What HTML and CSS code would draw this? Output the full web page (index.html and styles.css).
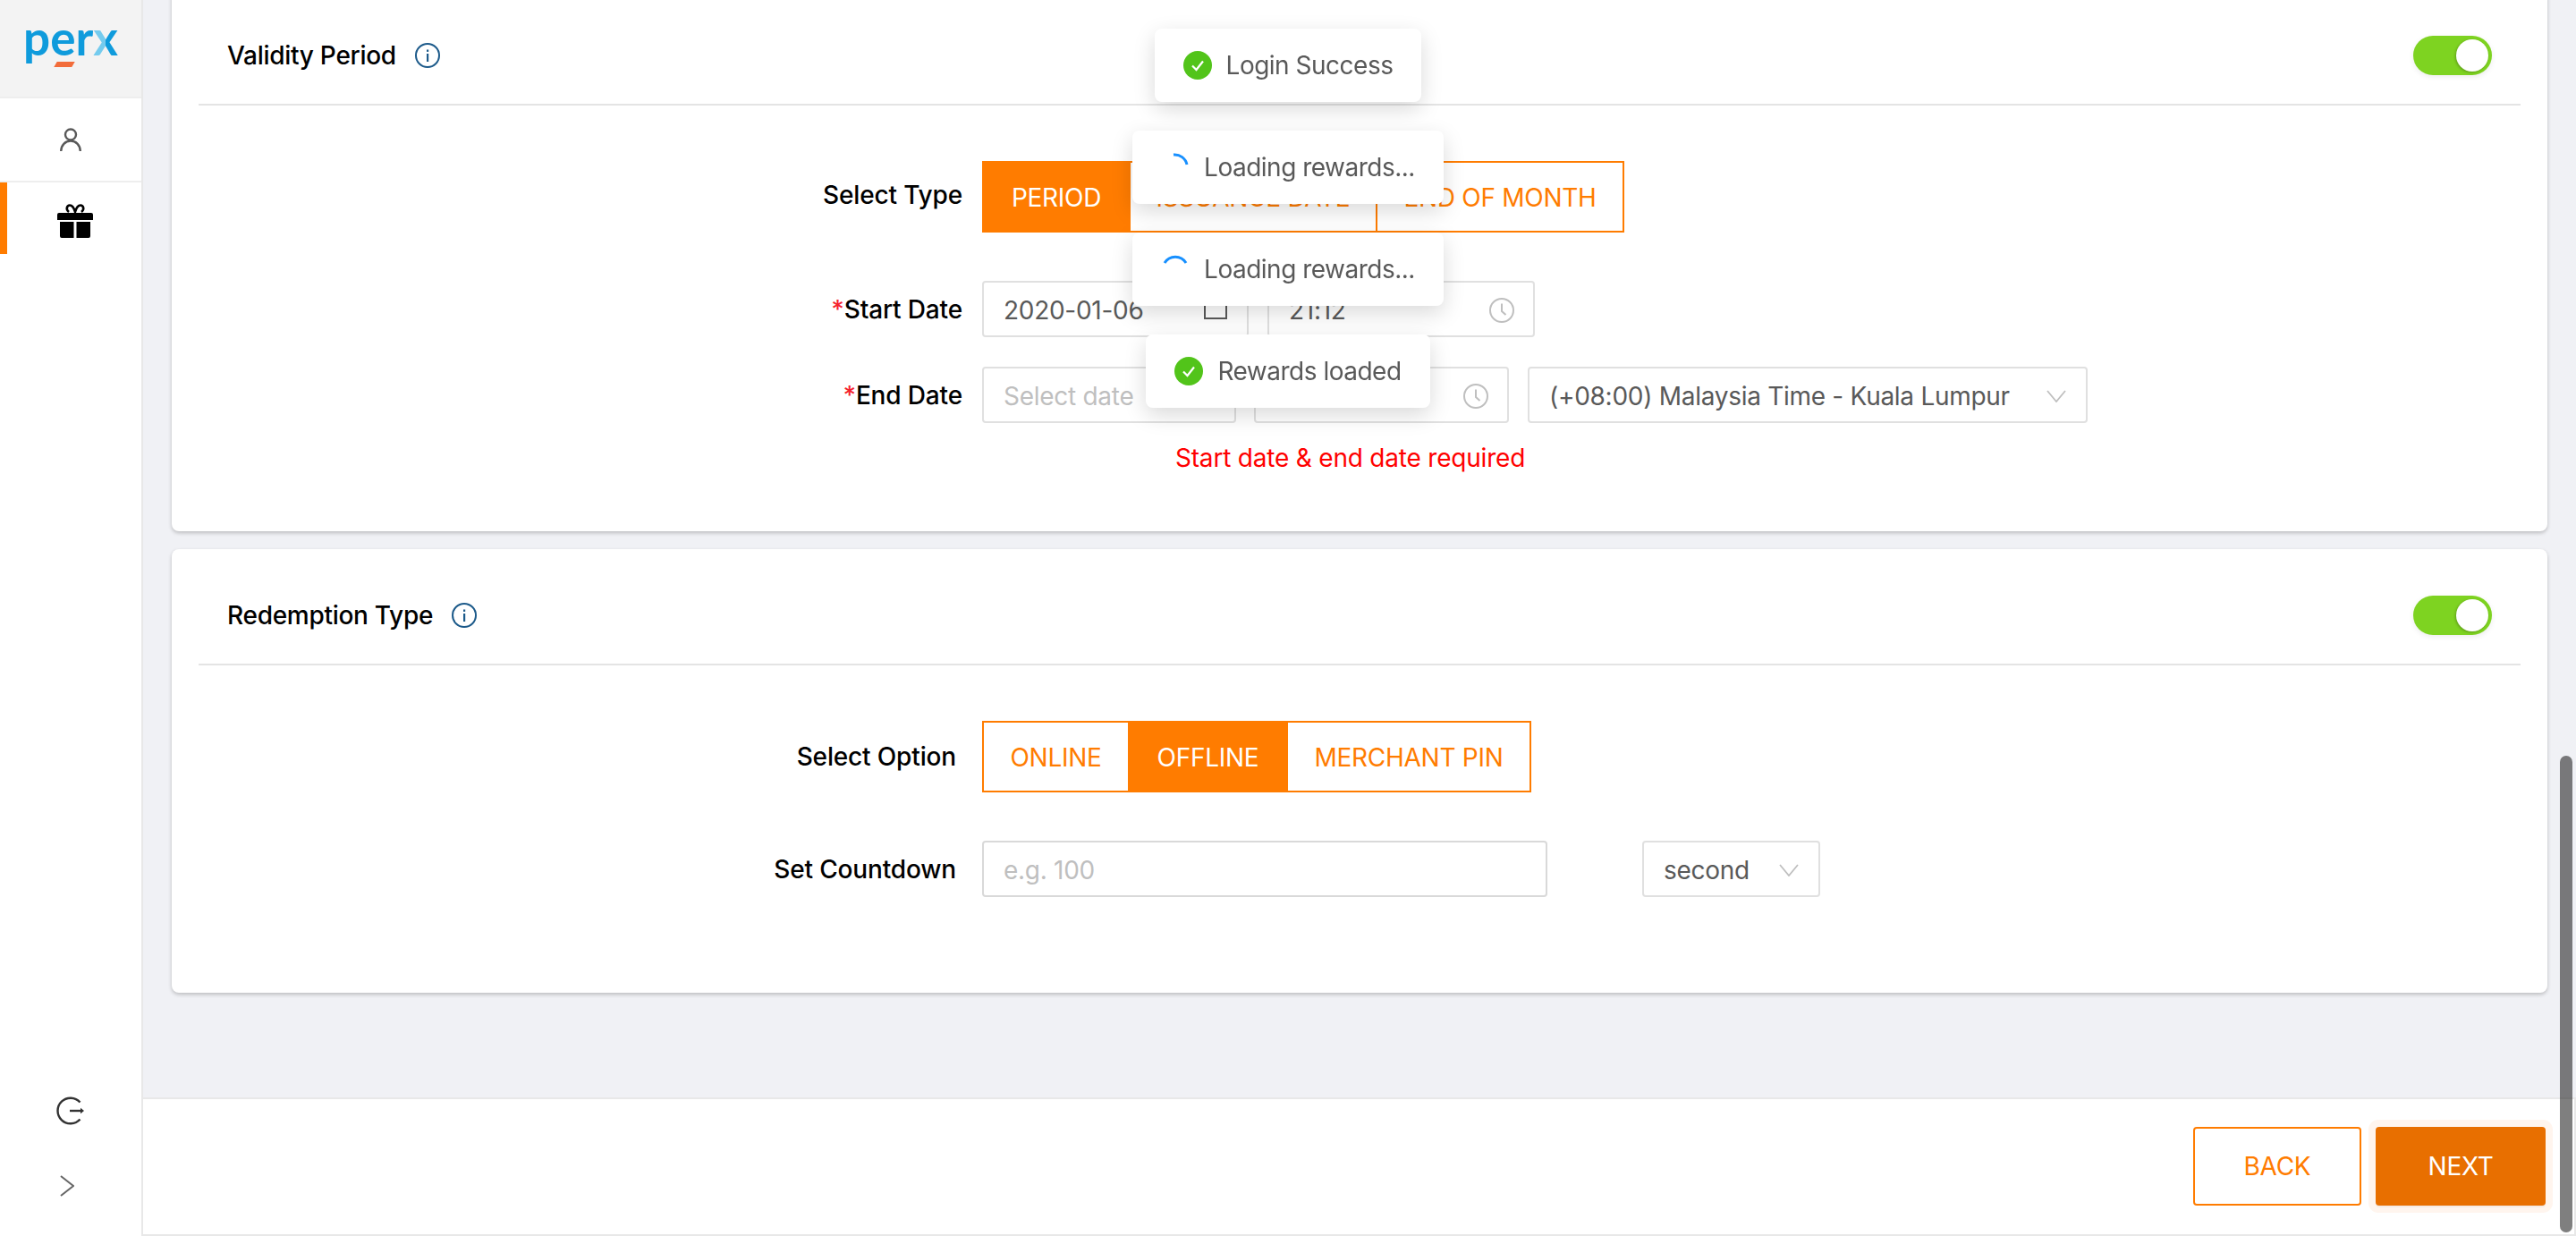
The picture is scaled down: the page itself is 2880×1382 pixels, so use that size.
FILE: index.html
```html
<!DOCTYPE html>
<html lang="en">
<head>
  <meta charset="UTF-8">
  <meta name="viewport" content="width=device-width, initial-scale=1.0">
  <title>Rewards</title>
  <link rel="stylesheet" href="styles.css">
</head>
<body>

  <aside class="sidebar">
    <div class="logo"><span class="logo-text">per<span class="logo-x">x</span></span><i class="logo-bar"></i></div>
    <a class="nav-item">
      <svg width="24" height="26" viewBox="0 0 24 26" fill="none" stroke="#595959" stroke-width="2.4"><circle cx="12" cy="7.5" r="6"/><path d="M1.2 26c0-6.500 4.800-11.500 10.800-11.500S22.800 19.500 22.800 26"/></svg>
    </a>
    <a class="nav-item nav-item-active">
      <svg width="40" height="38" viewBox="0 0 40 38"><path d="M13 9C9 6 11 1.500 14 1.500c3 0 5 4 6 7.500 1-3.500 3-7.500 6-7.500 3 0 5 4.500 1 7.500" fill="none" stroke="#000" stroke-width="2.600"/><path d="M2 10h36a2 2 0 0 1 2 2v6H0v-6a2 2 0 0 1 2-2zM3 20h15.500v18H5a2 2 0 0 1-2-2zM21.500 20H37v16a2 2 0 0 1-2 2H21.500z" fill="#000"/></svg>
    </a>
    <div class="sidebar-bottom">
      <svg class="logout-icon" width="32" height="32" viewBox="0 0 32 32" fill="none" stroke="#333" stroke-width="2.400"><path d="M26.500 6.500A14.300 14.300 0 1 0 26.500 25.500"/><path d="M15 16h14"/><path d="M27 12.800l4 3.200-4 3.200z" fill="#333" stroke="none"/></svg>
      <svg class="collapse-icon" width="16" height="24" viewBox="0 0 16 24" fill="none" stroke="#666" stroke-width="2"><path d="M1 1l14 11L1 23"/></svg>
    </div>
  </aside>

  <main class="main">
    <div class="content">

      <section class="card card-validity">
        <div class="card-header">
          <span class="card-title">Validity Period</span>
          <svg class="info-icon" width="28" height="28" viewBox="0 0 28 28"><circle cx="14" cy="14" r="13" fill="none" stroke="#1c5a8a" stroke-width="2"/><rect x="13" y="12" width="2.200" height="9" fill="#1c5a8a"/><rect x="13" y="7.500" width="2.200" height="2.400" fill="#1c5a8a"/></svg>
          <span class="toggle"><i class="toggle-knob"></i></span>
        </div>

        <div class="form-row row-type">
          <label class="form-label">Select Type</label>
          <div class="btn-group">
            <a class="btn-option btn-option-active opt-period">PERIOD</a>
            <a class="btn-option opt-issuance">ISSUANCE DATE</a>
            <a class="btn-option opt-month">END OF MONTH</a>
          </div>
        </div>

        <div class="form-row row-start">
          <label class="form-label"><span class="required">*</span>Start Date</label>
          <div class="field field-date-start">
            <span class="field-value">2020-01-06</span>
            <svg class="field-icon" width="26" height="24" viewBox="0 0 26 24" fill="none" stroke="#595959" stroke-width="2"><rect x="1" y="3" width="24" height="18"/></svg>
          </div>
          <div class="field field-time-start">
            <span class="field-value">21:12</span>
            <svg class="field-icon" width="28" height="28" viewBox="0 0 28 28" fill="none" stroke="#bfbfbf" stroke-width="2"><circle cx="14" cy="14" r="13"/><path d="M14 6.500V15l4.500 4"/></svg>
          </div>
        </div>

        <div class="form-row row-end">
          <label class="form-label"><span class="required">*</span>End Date</label>
          <div class="field field-date-end">
            <span class="field-placeholder">Select date</span>
          </div>
          <div class="field field-time-end">
            <svg class="field-icon" width="28" height="28" viewBox="0 0 28 28" fill="none" stroke="#bfbfbf" stroke-width="2"><circle cx="14" cy="14" r="13"/><path d="M14 6.500V15l4.500 4"/></svg>
          </div>
          <div class="field field-timezone">
            <span class="field-value">(+08:00) Malaysia Time - Kuala Lumpur</span>
            <svg class="field-icon" width="22" height="14" viewBox="0 0 22 14" fill="none" stroke="#bfbfbf" stroke-width="1.800"><path d="M1 1l10 12L21 1"/></svg>
          </div>
        </div>

        <p class="form-error">Start date &amp; end date required</p>
      </section>

      <section class="card card-redemption">
        <div class="card-header">
          <span class="card-title">Redemption Type</span>
          <svg class="info-icon" width="28" height="28" viewBox="0 0 28 28"><circle cx="14" cy="14" r="13" fill="none" stroke="#1c5a8a" stroke-width="2"/><rect x="13" y="12" width="2.200" height="9" fill="#1c5a8a"/><rect x="13" y="7.500" width="2.200" height="2.400" fill="#1c5a8a"/></svg>
          <span class="toggle"><i class="toggle-knob"></i></span>
        </div>

        <div class="form-row row-option">
          <label class="form-label">Select Option</label>
          <div class="btn-group">
            <a class="btn-option opt-online">ONLINE</a>
            <a class="btn-option btn-option-active opt-offline">OFFLINE</a>
            <a class="btn-option opt-pin">MERCHANT PIN</a>
          </div>
        </div>

        <div class="form-row row-countdown">
          <label class="form-label">Set Countdown</label>
          <div class="field field-countdown">
            <span class="field-placeholder">e.g. 100</span>
          </div>
          <div class="field field-unit">
            <span class="field-value">second</span>
            <svg class="field-icon" width="22" height="14" viewBox="0 0 22 14" fill="none" stroke="#bfbfbf" stroke-width="1.800"><path d="M1 1l10 12L21 1"/></svg>
          </div>
        </div>
      </section>

    </div>

    <footer class="footer">
      <a class="btn btn-back">BACK</a>
      <a class="btn btn-next">NEXT</a>
    </footer>
  </main>

  <!-- messages flottants -->
  <div class="toasts">
    <div class="toast">
      <svg class="toast-icon" width="32" height="32" viewBox="0 0 32 32"><circle cx="16" cy="16" r="16" fill="#52c41a"/><path d="M10 16.500l4.500 4.500L22 11.500" fill="none" stroke="#fff" stroke-width="2.200"/></svg>
      Login Success
    </div>
    <div class="toast">
      <svg class="toast-icon" width="32" height="32" viewBox="0 0 32 32" fill="none" stroke="#1890ff" stroke-width="3"><path d="M14 2a14 14 0 0 1 15 11"/></svg>
      Loading rewards...
    </div>
    <div class="toast">
      <svg class="toast-icon" width="32" height="32" viewBox="0 0 32 32" fill="none" stroke="#1890ff" stroke-width="3"><path d="M4 9a14 14 0 0 1 24 0"/></svg>
      Loading rewards...
    </div>
    <div class="toast">
      <svg class="toast-icon" width="32" height="32" viewBox="0 0 32 32"><circle cx="16" cy="16" r="16" fill="#52c41a"/><path d="M10 16.500l4.500 4.500L22 11.500" fill="none" stroke="#fff" stroke-width="2.200"/></svg>
      Rewards loaded
    </div>
  </div>

  <div class="scrollbar-thumb"></div>

</body>
</html>
```

FILE: styles.css
```css
html, body {
  height: 100%;
}

body {
  font-family: 'Inter', 'Liberation Sans', sans-serif;
  font-size: 28px;
  letter-spacing: -0.28px;
  background-color: #f0f1f5;
  margin: 0;
  padding: 0;
  color: #595959;
  display: flex;
  overflow: hidden;
}

/* Sidebar */

.sidebar {
  width: 158px;
  flex-shrink: 0;
  background-color: #fff;
  border-right: 2px solid #e8e8e8;
  display: flex;
  flex-direction: column;
}

.logo {
  height: 108px;
  background-color: #f3f3f3;
  border-bottom: 2px solid #eee;
  position: relative;
  display: flex;
  justify-content: center;
}

.logo-text {
  font-family: 'Lato', sans-serif;
  font-size: 53px;
  font-weight: 700;
  line-height: 84px;
  letter-spacing: 0;
  color: #0f9bdc;
}

.logo-x {
  background: linear-gradient(to right, #74cbee 50%, #0f9bdc 50%);
  -webkit-background-clip: text;
  background-clip: text;
  color: transparent;
}

.logo-bar {
  position: absolute;
  left: 62px;
  top: 69px;
  width: 20px;
  height: 6px;
  background-color: #f26c3a;
  transform: skewX(-30deg);
}

.nav-item {
  display: flex;
  align-items: center;
  justify-content: center;
  height: 92px;
  border-bottom: 2px solid #eee;
}

.nav-item-active {
  height: 80px;
  border-bottom: none;
  border-left: 8px solid #ff7c00;
  padding-left: 2px;
  align-items: flex-start;
}

.nav-item-active svg {
  margin-top: 24px;
}

.sidebar-bottom {
  margin-top: auto;
  display: flex;
  flex-direction: column;
  align-items: center;
  padding-bottom: 44px;
}

.logout-icon {
  margin-bottom: 56px;
}

.collapse-icon {
  margin-left: -8px;
}

/* Main */

.main {
  flex: 1;
  min-width: 0;
  display: flex;
  flex-direction: column;
  height: 100%;
}

.content {
  flex: 1;
  min-height: 0;
  overflow: hidden;
  padding: 0 32px;
}

.card {
  background-color: #fff;
  border-radius: 8px;
  box-shadow: 0 2px 4px rgba(0, 0, 0, 0.22);
  padding: 0 30px;
  box-sizing: border-box;
}

.card-validity {
  margin-top: -12px;
  height: 606px;
  margin-bottom: 20px;
}

.card-redemption {
  height: 496px;
}

.card-header {
  height: 130px;
  box-sizing: border-box;
  border-bottom: 2px solid #e4e4e4;
  display: flex;
  align-items: center;
  padding: 20px 2px 0 32px;
}

.card-title {
  color: #000;
  font-weight: 500;
  margin-right: 21px;
}

.info-icon {
  flex-shrink: 0;
}

.toggle {
  margin-left: auto;
  margin-right: 30px;
  width: 88px;
  height: 44px;
  border-radius: 22px;
  background-color: #7ed321;
  display: flex;
  align-items: center;
  justify-content: flex-end;
  padding-right: 4px;
  box-sizing: border-box;
  box-shadow: 0 2px 6px rgba(0, 0, 0, 0.08);
}

.toggle-knob {
  width: 36px;
  height: 36px;
  border-radius: 50%;
  background-color: #fff;
  box-shadow: -1px 1px 3px rgba(0, 0, 0, 0.25);
}

/* Form */

.form-row {
  display: flex;
  align-items: center;
  margin-left: -30px;
}

.form-label {
  width: 884px;
  margin-right: 22px;
  text-align: right;
  color: #000;
  font-weight: 500;
  letter-spacing: -0.15px;
  flex-shrink: 0;
}

.card-redemption .form-label {
  width: 877px;
  margin-right: 29px;
}

.required {
  color: #f5222d;
}

.row-type {
  margin-top: 62px;
}

.row-type .form-label {
  margin-bottom: 4px;
}

.row-start {
  margin-top: 54px;
}

.row-end {
  margin-top: 33px;
}

.row-option {
  margin-top: 62px;
}

.row-countdown {
  margin-top: 54px;
}

.btn-group {
  display: flex;
}

.btn-option {
  height: 80px;
  box-sizing: border-box;
  border: 2px solid #ff7c00;
  margin-left: -2px;
  padding-top: 2px;
  display: flex;
  align-items: center;
  justify-content: center;
  color: #ff7c00;
}

.btn-option:first-child {
  margin-left: 0;
}

.btn-option-active {
  background-color: #ff7c00;
  color: #fff;
}

.opt-period { width: 166px; }
.opt-issuance { width: 278px; }
.opt-month { width: 278px; }
.opt-online { width: 165px; }
.opt-offline { width: 179px; }
.opt-pin { width: 274px; }

.field {
  height: 63px;
  box-sizing: border-box;
  background-color: #fff;
  border: 2px solid #e0e0e0;
  border-radius: 4px;
  padding: 2px 22px 0;
  display: flex;
  align-items: center;
  justify-content: space-between;
  white-space: nowrap;
}

.field-placeholder {
  color: #bfbfbf;
}

.field-icon {
  flex-shrink: 0;
}

.field-date-start { width: 298px; margin-right: 21px; }
.field-time-start { width: 299px; }
.field-date-end { width: 284px; margin-right: 20px; }
.field-time-end { width: 285px; margin-right: 21px; justify-content: flex-end; }
.field-timezone { width: 626px; }
.field-countdown { width: 632px; margin-right: 106px; border-color: #d9d9d9; }
.field-unit { width: 199px; }

.field-time-start .field-icon,
.field-time-end .field-icon {
  margin-right: -1px;
}

.form-error {
  margin: 18px 0 0 -30px;
  color: #ff0000;
  padding-left: 1122px;
  line-height: 42px;
  letter-spacing: -0.2px;
}

/* Footer */

.footer {
  height: 153px;
  flex-shrink: 0;
  margin-bottom: 2px;
  box-sizing: border-box;
  background-color: #fff;
  border-top: 2px solid #e8e8e8;
  border-right: 2px solid #e8e8e8;
  box-shadow: 0 2px 0 #e8e8e8;
  display: flex;
  justify-content: flex-end;
  align-items: flex-start;
  padding: 31px 32px 0 0;
}

.btn {
  width: 190px;
  height: 88px;
  box-sizing: border-box;
  border-radius: 4px;
  display: flex;
  align-items: center;
  justify-content: center;
}

.btn-back {
  width: 188px;
  margin-right: 16px;
  border: 2px solid #ff7c00;
  color: #ff7c00;
}

.btn-next {
  background-color: #e86f00;
  color: #fff;
  box-shadow: 0 2px 0 rgba(0, 0, 0, 0.04), 0 0 0 8px #fff5ee;
}

/* Toasts */

.toasts {
  position: fixed;
  top: 32px;
  left: 0;
  right: 0;
  display: flex;
  flex-direction: column;
  align-items: center;
  gap: 32px;
}

.toast {
  height: 82px;
  box-sizing: border-box;
  padding: 0 32px;
  background-color: #fff;
  border-radius: 8px;
  box-shadow: 0 8px 24px rgba(0, 0, 0, 0.15);
  display: flex;
  align-items: center;
  white-space: nowrap;
  letter-spacing: -0.5px;
}

.toast-icon {
  margin-right: 16px;
  flex-shrink: 0;
}

.scrollbar-thumb {
  position: fixed;
  top: 845px;
  right: 4px;
  width: 14px;
  height: 533px;
  border-radius: 7px;
  background-color: rgba(0, 0, 0, 0.5);
}
```
